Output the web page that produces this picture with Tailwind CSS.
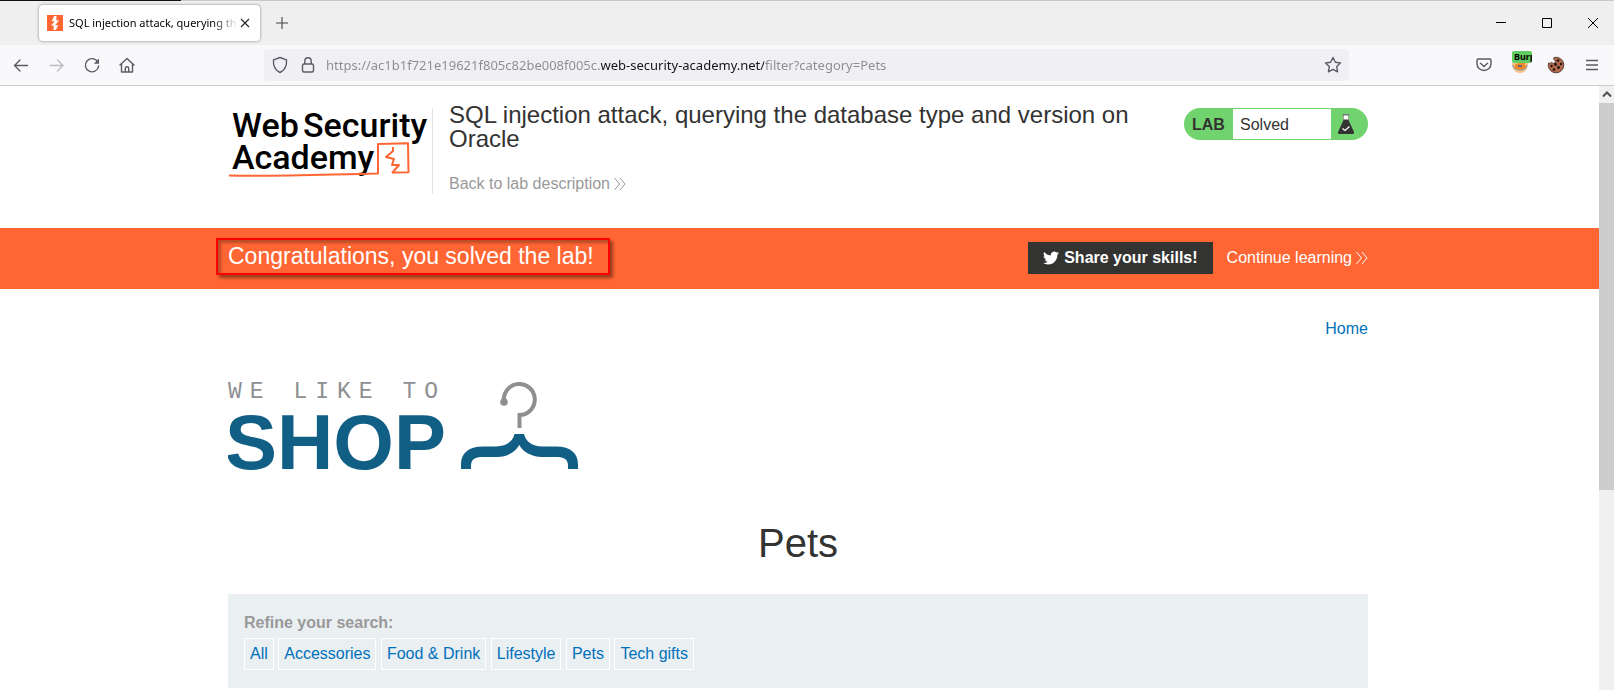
<!DOCTYPE html>
<html lang="en">
<head>
<meta charset="utf-8">
<title>SQL injection attack, querying the database type and version on Oracle</title>
<script src="https://cdn.jsdelivr.net/npm/@tailwindcss/browser@4"></script>
</head>
<body class="flex h-screen flex-col overflow-hidden bg-white font-['Liberation_Sans',Arial,sans-serif] text-base text-[#333332]">

<!-- Browser chrome -->
<div class="shrink-0 font-['Noto_Sans','Open_Sans',sans-serif] text-[#5b5b66]">
  <div class="flex h-px"><div class="w-[181px] bg-[#150c14]"></div><div class="flex-1 bg-[#c8c8c8]"></div></div>
  <div class="flex h-11 items-center bg-[#efefef] pl-[39px]">
    <div class="flex h-9 w-[221px] items-center rounded bg-white pl-2 pr-2.5 shadow-[0_0_3px_#80808e]">
      <svg class="size-4 shrink-0" viewBox="0 0 16 16"><path fill="#ff6633" d="M0 0h16v16H0z"/><path fill="#fff" d="M7.2 1h2.2v4.6H12L8 10.2h3.2L8.8 15H6.6v-4.4H4l3.8-4.4H4.6z"/></svg>
      <span class="ml-1.5 flex-1 overflow-hidden whitespace-nowrap text-[11px] text-black [mask-image:linear-gradient(90deg,#000_85%,transparent)]">SQL injection attack, querying the</span>
      <button aria-label="Close tab" class="ml-0.5"><svg class="size-2.5" viewBox="0 0 10 10" fill="none" stroke="#222" stroke-width="1.1"><path d="M1 1l8 8M9 1L1 9"/></svg></button>
    </div>
    <button aria-label="New tab" class="ml-4"><svg class="size-3" viewBox="0 0 12 12" fill="none" stroke="#444" stroke-width="1.1"><path d="M6 0v12M0 6h12"/></svg></button>
    <div class="ml-auto flex gap-9 pr-4">
      <button aria-label="Minimise"><svg class="size-2.5" viewBox="0 0 10 10"><path d="M0 4h10v1H0z"/></svg></button>
      <button aria-label="Maximise"><svg class="size-2.5" viewBox="0 0 10 10" fill="none" stroke="#000"><path d="M.5.5h9v9h-9z"/></svg></button>
      <button aria-label="Close"><svg class="size-2.5" viewBox="0 0 10 10" fill="none" stroke="#000"><path d="M0 0l10 10M10 0L0 10"/></svg></button>
    </div>
  </div>
  <div class="flex h-[41px] items-center border-b border-[#cccccc] bg-[#f9f9fb] pl-3">
    <div class="flex w-[252px] gap-[15px]">
      <button aria-label="Back"><svg class="size-5" viewBox="0 0 20 20" fill="none" stroke="currentColor" stroke-width="1.4" stroke-linecap="round" stroke-linejoin="round"><path d="M15.5 10.500H2.5M8 5L2.5 10.500 8 16"/></svg></button>
      <button aria-label="Forward" class="text-[#bcbcc4]"><svg class="size-5" viewBox="0 0 20 20" fill="none" stroke="currentColor" stroke-width="1.4" stroke-linecap="round" stroke-linejoin="round"><path d="M3 10.500h13M10.500 5l5.500 5.500L10.500 16"/></svg></button>
      <button aria-label="Reload"><svg class="size-5" viewBox="0 0 20 20" fill="none" stroke="currentColor" stroke-width="1.400" stroke-linecap="round"><path d="M15.800 7A6.600 6.600 0 1 0 16.600 11"/><path fill="currentColor" stroke="none" d="M17 3.500v5.200h-5.200z"/></svg></button>
      <button aria-label="Home"><svg class="size-5" viewBox="0 0 20 20" fill="none" stroke="currentColor" stroke-width="1.400" stroke-linejoin="round" stroke-linecap="round"><path d="M3 10l7-6.500 7 6.500M4.500 9v8h11v-8M8.300 17v-3.500a1.700 1.700 0 0 1 3.400 0v3.500"/></svg></button>
    </div>
    <div class="flex h-8 flex-1 items-center rounded bg-[#f0f0f4] pl-1.5 pr-1.5">
      <svg class="size-5 shrink-0" viewBox="0 0 20 20" fill="none" stroke="currentColor" stroke-width="1.400" stroke-linejoin="round"><path d="M10 2.500l6.500 2.400c.5 5-1.500 10.100-6.500 12.600-5-2.500-7-7.600-6.500-12.600z"/></svg>
      <svg class="ml-2 size-5 shrink-0" viewBox="0 0 20 20" fill="none" stroke="currentColor" stroke-width="1.400" stroke-linejoin="round"><rect x="4.500" y="9" width="11" height="8" rx="1.500"/><path d="M6.800 9V6a3.200 3.200 0 0 1 6.400 0v3"/></svg>
      <input aria-label="Address" type="text" spellcheck="false" value="https://ac1b1f721e19621f805c82be008f005c.web-security-academy.net/filter?category=Pets" class="mt-0.5 ml-2 min-w-0 flex-1 bg-[linear-gradient(90deg,#8b8b90_275px,#15141a_275px,#15141a_438px,#8b8b90_438px)] bg-clip-text text-[13px] text-transparent outline-none">
      <button aria-label="Bookmark"><svg class="size-5" viewBox="0 0 20 20" fill="none" stroke="currentColor" stroke-width="1.400" stroke-linejoin="round"><path d="M10 2.500l2.300 4.800 5.200.7-3.800 3.600.9 5.200-4.600-2.500-4.600 2.500.9-5.200L2.500 8l5.200-.7z"/></svg></button>
    </div>
    <div class="ml-[125px] flex items-center gap-4 pr-3">
      <button aria-label="Pocket"><svg class="size-5" viewBox="0 0 20 20" fill="none" stroke="currentColor" stroke-width="1.400" stroke-linejoin="round" stroke-linecap="round"><path d="M4.200 4h11.600c.8 0 1.200.5 1.200 1.200V9a7 6.500 0 0 1-14 0V5.200C3 4.500 3.400 4 4.200 4zM6.500 8.300L10 11.500l3.500-3.200"/></svg></button>
      <button aria-label="Burp proxy" class="relative size-5"><svg class="size-5" viewBox="0 0 20 20"><path fill="#f9c58d" d="M2 8h16c0 6-3 10-8 10S2 14 2 8z"/><path fill="none" stroke="#9c958f" stroke-width="1.500" d="M3 10c1 6 12 7 14 0"/><path fill="#f08a24" d="M5 9l10-2 .5 6L10 15l-5-2z"/><path fill="#667" d="M8 10h4v2H8z"/></svg><span class="absolute -top-1 left-0.5 h-3 w-5 overflow-hidden rounded-xs bg-[#60cc62] pl-0.5 text-left text-[9px] leading-3 font-bold text-black">Burp</span></button>
      <button aria-label="Cookies"><svg class="size-5" viewBox="0 0 20 20"><path fill="#b4694a" stroke="#50413b" d="M8 2.500c-.5 2 0 3 1.700 3.300 0 2.200-2.600 3.400-4.200 1.700-1.500 1-2 .7-3 .5A7.800 7.800 0 1 0 8 2.500z"/><g fill="#1d1411"><circle cx="12" cy="5.500" r="1.300"/><circle cx="15" cy="9" r="1.200"/><circle cx="9.500" cy="9.500" r="1.400"/><circle cx="5.500" cy="11" r="1.200"/><circle cx="12.500" cy="12.500" r="1.400"/><circle cx="8" cy="14.500" r="1.300"/></g></svg></button>
      <button aria-label="Menu"><svg class="size-5" viewBox="0 0 20 20" fill="none" stroke="currentColor" stroke-width="1.400"><path d="M4 5.500h12M4 10h12M4 14.500h12"/></svg></button>
    </div>
  </div>
</div>

<div class="flex min-h-0 flex-1">
  <div class="min-w-0 flex-1 overflow-hidden">
    <header class="pr-[3px]">
      <div class="mx-auto flex h-[142px] max-w-[1140px] items-start pt-[17px]">
        <svg class="mt-[5px] h-[78px] w-[204px] shrink-0" viewBox="0 0 204 78" role="img" aria-label="Web Security Academy">
          <g font-family="Roboto, sans-serif" font-weight="500" fill="#000"><text x="4" y="29" font-size="34">Web</text><text x="75" y="29" font-size="34">Security</text><text x="4" y="61" font-size="34">Academy</text></g>
          <g fill="none" stroke="#ff6633" stroke-linejoin="round"><path stroke-width="2" d="M1 67.500c45 1 95-1 149-2V36l30-.800.500 29-16 .300"/><path stroke-width="2" d="M165 39v4l-7 6 8 2-2 6h7l-7 8"/></g>
        </svg>
        <div class="mt-[5px] h-[86px] w-px shrink-0 bg-[#e2e2e2]"></div>
        <div class="ml-4 min-w-0 flex-1 pr-5">
          <h2 class="text-2xl leading-6">SQL injection attack, querying the database type and version on Oracle</h2>
          <a href="#" class="mt-[21px] flex items-center gap-1 text-[#999999]">Back to lab description<svg class="size-3" viewBox="0 0 12 12" fill="none" stroke="currentColor" stroke-width="1"><path d="M.500 0l5 6-5 6M6 0l5 6-5 6"/></svg></a>
        </div>
        <div class="mt-[5px] flex h-8 w-[184px] shrink-0 items-stretch overflow-hidden rounded-full bg-[#70d36e]">
          <strong class="w-[49px] pl-2 leading-[34px]">LAB</strong>
          <p class="my-px w-[98px] bg-white pl-[7px] leading-[32px]">Solved</p>
          <svg class="mt-1.5 ml-1.5 h-5 w-[18px]" viewBox="0 0 18 20"><path fill="#fff" stroke="#777" stroke-width=".6" d="M6.500 1h5v6h-5z"/><path fill="#777" d="M5.500 0h7v1.200h-7z"/><path fill="#333332" d="M6.800 5.500h4.400L17 18c.300 1-.2 2-1.200 2H2.200C1.200 20 .7 19 1 18z"/><path fill="none" stroke="#fff" stroke-width="1.300" d="M5.500 14.500l2.500 2 4.500-4"/></svg>
        </div>
      </div>
    </header>

    <section class="bg-[#ff6633] pr-[3px] text-white">
      <div class="mx-auto flex h-[61px] max-w-[1140px] items-center pb-px">
        <h4 class="-ml-3 border-2 border-[#ff0000] pr-3.5 pl-2.5 text-[23px] leading-[33px] shadow-[3px_3px_3px_#0006,inset_3px_3px_3px_#0004] mb-1">Congratulations, you solved the lab!</h4>
        <button class="ml-auto flex h-8 items-center gap-[5px] bg-[#333332] px-[15px] font-bold"><svg class="size-4" viewBox="0 0 24 24" fill="#fff"><path d="M23.950 4.570a10 10 0 0 1-2.820.770 4.960 4.960 0 0 0 2.160-2.720c-.950.550-2 .950-3.130 1.180a4.920 4.920 0 0 0-8.380 4.480C7.690 8.090 4.070 6.130 1.640 3.160a4.820 4.820 0 0 0-.670 2.480c0 1.710.870 3.210 2.190 4.100a4.900 4.900 0 0 1-2.230-.620v.060a4.920 4.920 0 0 0 3.950 4.830 5 5 0 0 1-2.210.080 4.940 4.940 0 0 0 4.600 3.420A9.870 9.870 0 0 1 0 19.540a13.990 13.990 0 0 0 7.550 2.210c9.050 0 14-7.500 14-13.980 0-.210 0-.420-.020-.630a9.940 9.940 0 0 0 2.420-2.570z"/></svg>Share your skills!</button>
        <a href="#" class="ml-3.5 flex items-center gap-1">Continue learning<svg class="size-3" viewBox="0 0 12 12" fill="none" stroke="currentColor" stroke-width="1"><path d="M.500 0l5 6-5 6M6 0l5 6-5 6"/></svg></a>
      </div>
    </section>

    <main class="pr-[3px]">
      <div class="mx-auto max-w-[1140px]">
        <nav class="flex justify-end pt-7"><a href="#" class="text-[#0071bc]">Home</a></nav>
        <svg class="mt-10 h-[92px] w-[352px]" viewBox="0 0 352 92" role="img" aria-label="We like to shop">
          <text x="0" y="17" font-family="Liberation Mono, monospace" font-size="23" fill="#8e8f91" class="tracking-[8px]">WE LIKE TO</text>
          <text x="-3" y="88" font-family="Liberation Sans, sans-serif" font-weight="700" font-size="78" fill="#125f85">SHOP</text>
          <g fill="none" stroke="#8e8f91" stroke-width="4"><path d="M276 21a15.500 15.500 0 1 1 15.500 13v13"/></g><circle cx="276" cy="21" r="3.800" fill="#8e8f91"/>
          <path fill="#125f85" d="M286.500 53h9.500c2 8 8 12 18 12.500h14c15 0 22 7 22 18V88h-10v-3c0-7-4-9-12-9h-14c-11-.500-19-5-22.700-12-4 7-11 11.500-22.300 12h-14c-8 0-12 2-12 9v3h-10v-4.500c0-11 7-18 22-18h13c10-.500 16.500-4.500 18.500-12.500z"/>
        </svg>
        <h1 class="mt-10 text-center text-[40px] leading-[60px]">Pets</h1>
        <section class="mt-[21px] bg-[#eaeff2] px-4 pt-[17px] pb-[18px]">
          <h3 class="font-bold text-[#999999]">Refine your search:</h3>
          <div class="mt-[3px] text-[#0071bc]">
            <a href="#" class="inline-block border border-white px-[5px] py-[3px]">All</a>
            <a href="#" class="inline-block border border-white px-[5px] py-[3px]">Accessories</a>
            <a href="#" class="inline-block border border-white px-[5px] py-[3px]">Food &amp; Drink</a>
            <a href="#" class="inline-block border border-white px-[5px] py-[3px]">Lifestyle</a>
            <a href="#" class="inline-block border border-white px-[5px] py-[3px]">Pets</a>
            <a href="#" class="inline-block border border-white px-[5px] py-[3px]">Tech gifts</a>
          </div>
        </section>
      </div>
    </main>
  </div>

  <!-- Page scrollbar -->
  <div class="flex w-[15px] shrink-0 flex-col bg-[#f0f0f0]" aria-hidden="true">
    <svg class="h-[17px] w-[15px] shrink-0" viewBox="0 0 15 17" fill="none" stroke="#505050" stroke-width="2"><path d="M4 10.500L8 6.500l4 4"/></svg>
    <div class="h-[64%] bg-[#cdcdcd]"></div>
  </div>
</div>
</body>
</html>
